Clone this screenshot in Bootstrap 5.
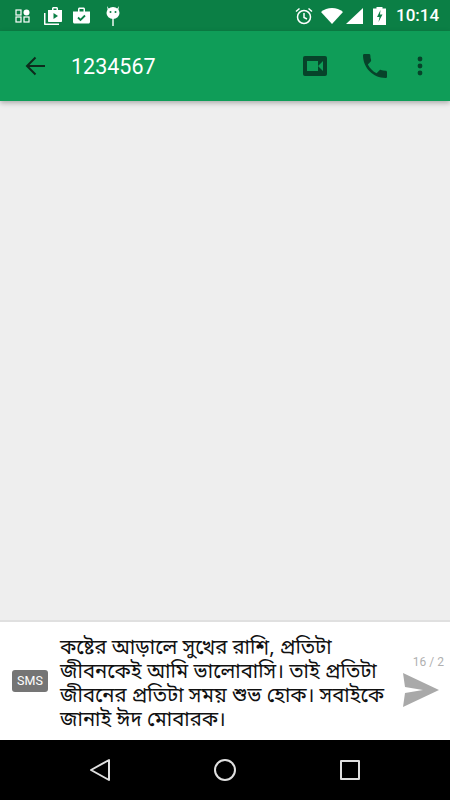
<!DOCTYPE html>
<html lang="bn">
<head>
  <meta charset="UTF-8" />
  <meta name="viewport" content="width=device-width, initial-scale=1" />
  <title>1234567</title>
  <link href="https://cdn.jsdelivr.net/npm/bootstrap@5.3.0/dist/css/bootstrap.min.css" rel="stylesheet" />
  <style>
    body {
      background-color: #eeeeee;
      font-family: Roboto, "Noto Sans", sans-serif;
      height: 800px;
      overflow: hidden;
    }
    .screen { height: 800px; }

    .status-bar { height: 31px; background-color: #0b7f45; padding: 0 11px 0 15px; color: #fff; }
    .status-time { font-size: 17px; font-weight: 500; margin-left: 10px; width: 43px; text-align: right; }
    .sb-play { margin-left: 13px; }
    .sb-work { margin-left: 9px; }
    .sb-droid { margin-left: 14px; }
    .sb-wifi { margin-left: 8px; }
    .sb-signal { margin-left: 3px; }
    .sb-batt { margin-left: 10px; }

    .app-bar {
      height: 70px;
      background-color: #0f9d58;
      box-shadow: 0 2px 5px rgba(0,0,0,.28);
      padding-left: 25px;
      z-index: 2;
    }
    .app-title { font-size: 21.5px; color: #fff; margin-left: 26px; padding-top: 2px; }
    .act-call { margin-left: 36px; }
    .act-more { margin-left: 30px; margin-right: 27px; }

    .thread { background-color: #eeeeee; }

    .composer {
      height: 120px;
      background-color: #fff;
      border-top: 2px solid #e0e0e0;
    }
    .sms-tag {
      width: 36px; height: 22px; margin-left: 12px;
      background-color: #757575; color: #fff;
      font-size: 12.5px; border-radius: 3px;
    }
    .draft {
      width: 334px; margin-left: 12px; padding-top: 15px;
      font-size: 20.3px; line-height: 24px; color: #111;
      white-space: nowrap;
      font-family: "Noto Sans Bengali", "Lohit Bengali", "Noto Sans", sans-serif;
    }
    .send-box { width: 56px; }
    .counter { font-size: 12px; color: #b0b0b0; white-space: nowrap; line-height: 14px; margin-right: 6px; }
    .send-icon { margin-right: 11px; margin-top: 4px; }

    .nav-strip { height: 60px; background-color: #000; }
    .nav-home { margin-left: 103px; }
    .nav-back { margin-left: 89px; }
    .nav-recent { margin-left: 104px; }
  </style>
</head>
<body>
  <div class="screen d-flex flex-column">

    <div class="status-bar d-flex align-items-center flex-shrink-0">
      <svg width="15" height="15" viewBox="0 0 15 15" fill="none" stroke="#fff" stroke-width="1.2"><rect x="1" y="2" width="5" height="5"/><rect x="1" y="9" width="5" height="5"/><rect x="9" y="9" width="5" height="5"/><circle cx="11.5" cy="4.5" r="3" fill="#fff" stroke="none"/></svg>
      <svg class="sb-play" width="20" height="20" viewBox="0 0 20 20" fill="#fff"><path d="M5 4h4V2.500C9 1.700 9.700 1 10.500 1h3c.8 0 1.500.7 1.500 1.500V4h4v11c0 .6-.4 1-1 1H6c-.6 0-1-.4-1-1z"/><path d="M10.500 2.500h3V4h-3z" fill="#0b7f45"/><path d="M10.500 7v6l4.500-3z" fill="#0b7f45"/><path d="M1 7h1.500v10.500H16V19H2c-.6 0-1-.4-1-1z"/></svg>
      <svg class="sb-work" width="19" height="19" viewBox="0 0 19 19" fill="#fff"><path d="M1 5.500h5V3c0-.8.7-1.500 1.500-1.500h4c.8 0 1.500.7 1.500 1.500v2.500h5V16c0 .8-.7 1.500-1.500 1.500h-14C1.700 17.500 1 16.800 1 16z"/><path d="M7.500 3h4v2.500h-4z" fill="#0b7f45"/><path d="M6 11.500l2.500 2.500 4.500-4.500" fill="none" stroke="#0b7f45" stroke-width="1.800"/></svg>
      <svg class="sb-droid" width="16" height="22" viewBox="0 0 16 22" fill="#fff"><path d="M2 1l2 3h8l2-3-.8 4.500H2.800z"/><ellipse cx="8" cy="8" rx="6.500" ry="6"/><rect x="7.300" y="13" width="1.400" height="8"/><circle cx="5.500" cy="7" r="1" fill="#0b7f45"/><circle cx="10.500" cy="7" r="1" fill="#0b7f45"/></svg>

      <div class="ms-auto d-flex align-items-center">
        <svg width="18" height="18" viewBox="0 0 18 18" fill="none" stroke="#fff" stroke-width="1.500"><circle cx="9" cy="10" r="6.500"/><path d="M9 6v4.500l3 1.500M1 4.500L4.500 1.500M17 4.500L13.500 1.500"/></svg>
        <svg class="sb-wifi" width="22" height="16" viewBox="0 0 22 16" fill="#fff"><path d="M0 4C6-1.300 16-1.300 22 4L11 16z"/></svg>
        <svg class="sb-signal" width="17" height="16" viewBox="0 0 17 16" fill="#fff"><path d="M0 16L17 0v16z"/></svg>
        <svg class="sb-batt" width="13" height="19" viewBox="0 0 13 19"><path d="M0 2.500h3.500V1h6v1.500H13V19H0z" fill="#fff"/><path d="M7.500 4L4 11h2.500L5.500 16 9.500 8.500H7z" fill="#0b7f45"/></svg>
        <span class="status-time">10:14</span>
      </div>
    </div>

    <div class="app-bar d-flex align-items-center flex-shrink-0 position-relative">
      <svg width="20" height="20" viewBox="0 0 20 20" fill="none" stroke="#0d2b1c" stroke-width="2"><path d="M20 10H2M10.500 1.500L2 10l8.500 8.500"/></svg>
      <span class="app-title">1234567</span>
      <div class="ms-auto d-flex align-items-center">
        <svg width="24" height="20" viewBox="0 0 24 20"><rect width="24" height="20" rx="2" fill="#07432a"/><path d="M4 5h11v10H4zM15 10l5-5v10z" fill="#0f9d58"/></svg>
        <svg class="act-call" width="24" height="24" viewBox="3 3 18 18" fill="#07432a"><path d="M6.620 10.790c1.440 2.830 3.760 5.140 6.590 6.590l2.200-2.200c.27-.27.67-.36 1.020-.24 1.120.37 2.330.57 3.570.57.550 0 1 .45 1 1V20c0 .55-.45 1-1 1C10.610 21 3 13.390 3 4c0-.55.45-1 1-1h3.500c.55 0 1 .45 1 1 0 1.250.2 2.450.57 3.570.11.35.03.74-.25 1.020z"/></svg>
        <svg class="act-more" width="6" height="20" viewBox="0 0 6 20" fill="#07432a"><circle cx="3" cy="3" r="2.400"/><circle cx="3" cy="10" r="2.400"/><circle cx="3" cy="17" r="2.400"/></svg>
      </div>
    </div>

    <div class="thread flex-grow-1"></div>

    <div class="composer d-flex align-items-center flex-shrink-0">
      <div class="sms-tag d-flex align-items-center justify-content-center flex-shrink-0">SMS</div>
      <div class="draft flex-shrink-0 align-self-start">কষ্টের আড়ালে সুখের রাশি, প্রতিটা<br>জীবনকেই আমি ভালোবাসি। তাই প্রতিটা<br>জীবনের প্রতিটা সময় শুভ হোক। সবাইকে<br>জানাই ঈদ মোবারক।</div>
      <div class="send-box d-flex flex-column align-items-end flex-shrink-0">
        <span class="counter">16 / 2</span>
        <svg class="send-icon" width="36" height="34" viewBox="0 0 36 34"><path d="M0 0l36 17L0 34l2-14 18-3L2 14z" fill="#a9a9a9"/></svg>
      </div>
    </div>

    <div class="nav-strip d-flex align-items-center flex-shrink-0 position-relative">
      <svg class="nav-back" width="22" height="24" viewBox="0 0 22 24" fill="none" stroke="#e0e0e0" stroke-width="2" stroke-linejoin="round"><path d="M20 2v20L2 12z"/></svg>
      <svg class="nav-home" width="22" height="22" viewBox="0 0 22 22" fill="none" stroke="#e0e0e0" stroke-width="2"><circle cx="11" cy="11" r="10"/></svg>
      <svg class="nav-recent" width="20" height="20" viewBox="0 0 20 20" fill="none" stroke="#e0e0e0" stroke-width="2" stroke-linejoin="round"><rect x="1" y="1" width="18" height="18"/></svg>
    </div>
  </div>
  <script src="https://cdn.jsdelivr.net/npm/bootstrap@5.3.0/dist/js/bootstrap.bundle.min.js"></script>
</body>
</html>
